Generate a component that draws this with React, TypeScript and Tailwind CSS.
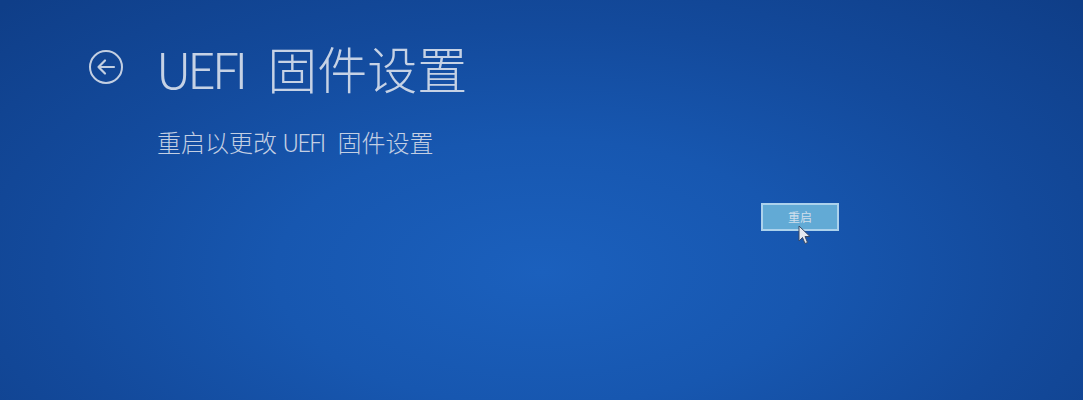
import React from "react";

export default function App() {
  return (
    <div
      className="relative h-[400px] w-full overflow-hidden bg-[radial-gradient(ellipse_70%_95%_at_50%_68%,#1b60bd_0%,#1757b0_35%,#134a9c_65%,#0f3e88_100%)]"
      style={{ fontFamily: '"Noto Sans CJK SC", "Noto Sans", sans-serif' }}
    >
      <div className="flex flex-col pl-[88px] pt-[40px]">
        <div className="flex items-center">
          <svg width="36" height="36" viewBox="0 0 36 36" className="shrink-0">
            <circle cx="18" cy="18" r="16" fill="none" stroke="#c3cfe2" strokeWidth="2" />
            <path d="M10.5 18 H26 M17 11.5 L10.5 18 L17 24.5" fill="none" stroke="#c3cfe2" strokeWidth="2.2" strokeLinecap="round" strokeLinejoin="round" />
          </svg>
          <div className="ml-[32px] text-[50px] font-light leading-[54px] text-[#c6d2e5]">
            <span className="tracking-[-4px]">UEFI</span> <span className="ml-[12px]">固件设置</span>
          </div>
        </div>
        <div className="ml-[69px] mt-[33px] text-[24px] font-light leading-[30px] text-[#c3cfe3]">
          重启以更改 <span className="tracking-[-2px]">UEFI</span> <span className="ml-[8px]">固件设置</span>
        </div>
        <div className="ml-[673px] mt-[46px] flex h-[28px] w-[78px] items-center justify-center border-2 border-[#acd2ec] bg-[#62aad5] text-[12px] leading-none text-[#d0dfec]">
          重启
        </div>
      </div>
      <svg
        className="absolute left-[798px] top-[225px]"
        width="14"
        height="20"
        viewBox="0 0 14 20"
      >
        <path d="M1 1 L1 16 L4.5 12.5 L7 18.5 L9.5 17.5 L7 11.5 L12 11.5 Z" fill="#e6eaf0" stroke="#3a4a66" strokeWidth="1" strokeLinejoin="round" />
      </svg>
    </div>
  );
}
